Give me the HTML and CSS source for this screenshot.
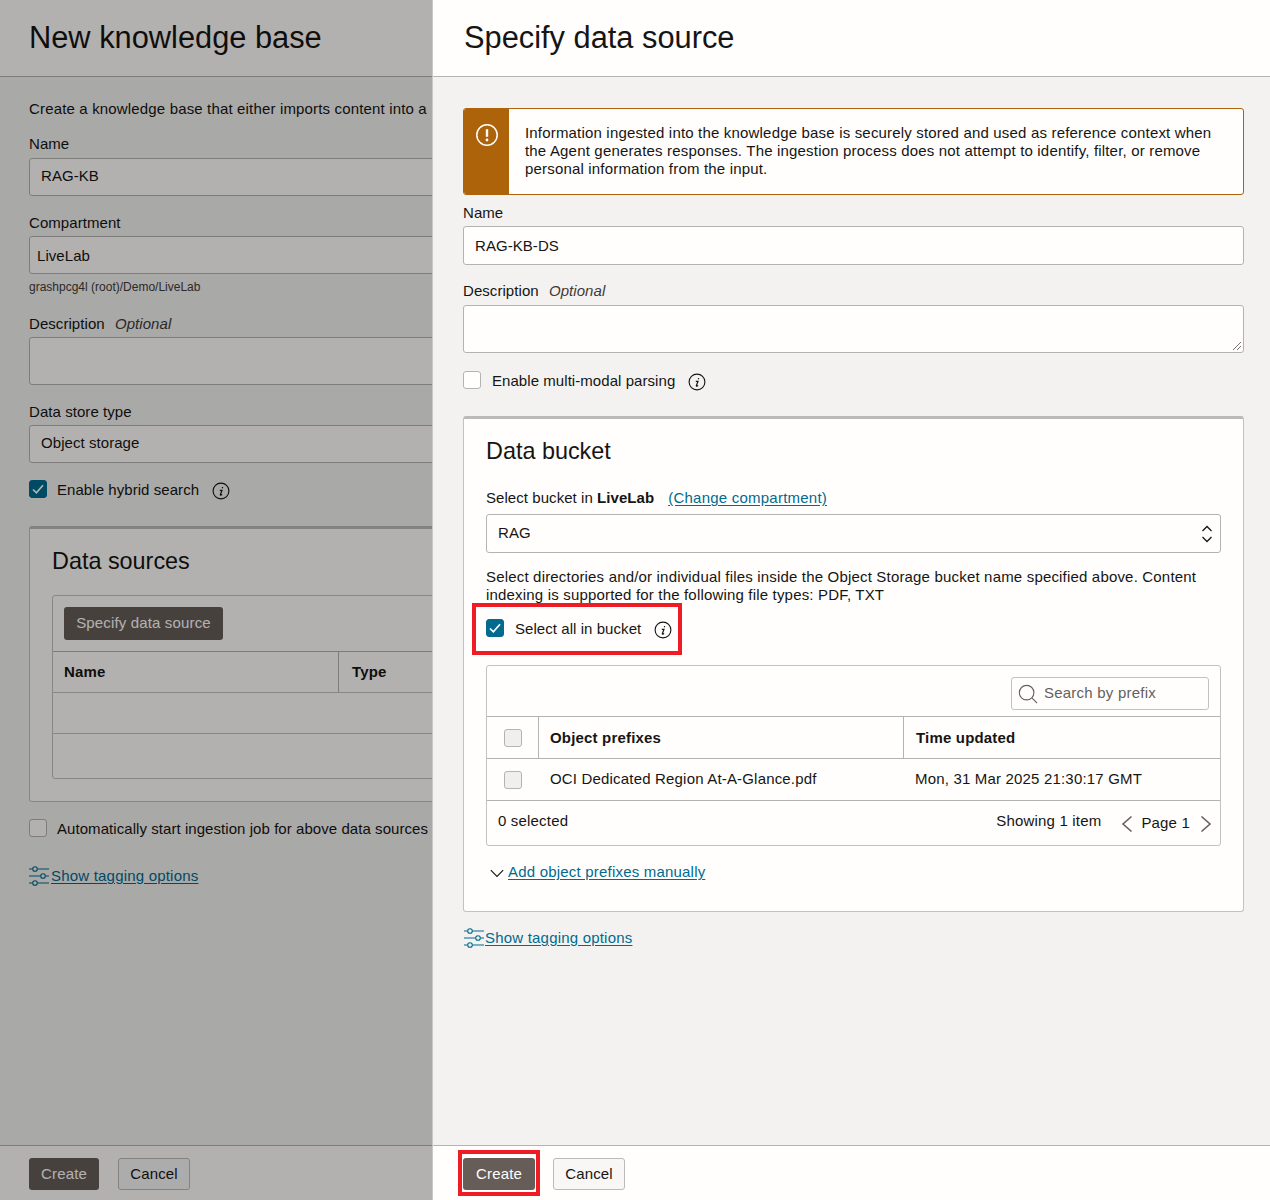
FILE: index.html
```html
<!DOCTYPE html>
<html lang="en">
<head>
<meta charset="utf-8">
<title>Specify data source</title>
<link rel="stylesheet" href="styles.css">
</head>
<body>
<svg class="defs" width="0" height="0" aria-hidden="true">
  <symbol id="info" viewBox="0 0 18 18"><circle cx="9" cy="9" r="7.9" fill="none" stroke="currentColor" stroke-width="1.1"/><path d="M10.500 5v1.300M7.800 8.300h2.200L8.300 12.800c0 .5.800.5 1.800-.2" fill="none" stroke="currentColor" stroke-width="1.200"/></symbol>
  <symbol id="tag" viewBox="0 0 20 20"><g fill="none" stroke="currentColor" stroke-width="1.1"><circle cx="6" cy="3" r="2.3"/><path d="M0 3h3.500M8.500 3H20"/><circle cx="14" cy="10" r="2.3"/><path d="M0 10h11.500M16.500 10H20"/><circle cx="6" cy="17" r="2.3"/><path d="M0 17h3.500M8.500 17H20"/></g></symbol>
  <symbol id="check" viewBox="0 0 18 18"><path d="M4 9.500l3.400 3.300L14 5.200" fill="none" stroke="#fff" stroke-width="1.700"/></symbol>
</svg>

<section class="panel panel-back">
  <header class="panel-head"><h1>New knowledge base</h1></header>
  <main class="panel-body body-back">
    <div class="clip">
      <p class="intro">Create a knowledge base that either imports content into a</p>
      <div class="label l-name">Name</div>
      <div class="input h38">RAG-KB</div>
      <div class="label l-comp">Compartment</div>
      <div class="input h38 tight">LiveLab</div>
      <div class="hint">grashpcg4l (root)/Demo/LiveLab</div>
      <div class="label l-desc">Description <em>Optional</em></div>
      <div class="input h48"></div>
      <div class="label l-store">Data store type</div>
      <div class="input h38">Object storage</div>
      <div class="check-row r-hybrid"><span class="box on back"><svg><use href="#check"/></svg></span><span class="check-text">Enable hybrid search</span><svg class="info"><use href="#info"/></svg></div>
      <div class="card card-back">
        <h2>Data sources</h2>
        <div class="tbl tbl-back">
          <div class="tb-top"><span class="btn primary back wide">Specify data source</span></div>
          <div class="ds-row ds-head"><b class="ds-c1">Name</b><b class="ds-c2">Type</b></div>
          <div class="ds-row ds-empty"></div>
          <div class="ds-last"></div>
        </div>
      </div>
      <div class="check-row r-auto"><span class="box"></span><span class="check-text">Automatically start ingestion job for above data sources</span></div>
      <a class="tag-link tl-back"><svg><use href="#tag"/></svg><span>Show tagging options</span></a>
    </div>
  </main>
  <footer class="panel-foot"><span class="btn primary back">Create</span><span class="btn second">Cancel</span></footer>
  <div class="scrim"></div>
</section>

<section class="panel panel-front">
  <header class="panel-head"><h1>Specify data source</h1></header>
  <main class="panel-body">
    <div class="alert">
      <div class="alert-side"><svg viewBox="0 0 24 24"><circle cx="12" cy="12" r="10.200" fill="none" stroke="#fff" stroke-width="1.500"/><path d="M12 6.200v7.600" stroke="#fff" stroke-width="2.400"/><circle cx="12" cy="17" r="1.400" fill="#fff"/></svg></div>
      <p>Information ingested into the knowledge base is securely stored and used as reference context when the Agent generates responses. The ingestion process does not attempt to identify, filter, or remove personal information from the input.</p>
    </div>
    <div class="label f-name">Name</div>
    <div class="input h39">RAG-KB-DS</div>
    <div class="label f-desc">Description <em>Optional</em></div>
    <div class="input h48 grip"></div>
    <div class="check-row r-multi"><span class="box"></span><span class="check-text">Enable multi-modal parsing</span><svg class="info"><use href="#info"/></svg></div>

    <div class="card card-front">
      <h2>Data bucket</h2>
      <div class="bucket-line">Select bucket in <b>LiveLab</b><a class="link">(Change compartment)</a></div>
      <div class="input h39 select">RAG
        <svg viewBox="0 0 12 18"><path d="M1.500 6L6 1.500 10.500 6M1.500 12L6 16.500 10.500 12" fill="none" stroke="#161513" stroke-width="1.300"/></svg>
      </div>
      <p class="bucket-text">Select directories and/or individual files inside the Object Storage bucket name specified above. Content indexing is supported for the following file types: PDF, TXT</p>
      <div class="check-row r-all">
        <span class="box on"><svg><use href="#check"/></svg></span><span class="check-text">Select all in bucket</span><svg class="info"><use href="#info"/></svg>
        <i class="mark mark-all"></i>
      </div>
      <div class="tbl tbl-front">
        <div class="tb-search">
          <div class="search"><svg viewBox="0 0 22 22"><circle cx="9.500" cy="9.500" r="8" fill="none" stroke="#665f5b" stroke-width="1.200"/><path d="M15.500 15.500l5.500 5.500" stroke="#665f5b" stroke-width="1.200"/></svg><span>Search by prefix</span></div>
        </div>
        <div class="ob-row ob-head">
          <div class="ob-c0"><span class="box soft"></span></div>
          <b class="ob-c1">Object prefixes</b>
          <b class="ob-c2">Time updated</b>
        </div>
        <div class="ob-row ob-data">
          <div class="ob-c0 plain"><span class="box soft"></span></div>
          <span class="ob-c1 plain">OCI Dedicated Region At-A-Glance.pdf</span>
          <span class="ob-c2 plain">Mon, 31 Mar 2025 21:30:17 GMT</span>
        </div>
        <div class="ob-foot">
          <span class="sel">0 selected</span>
          <span class="show">Showing 1 item</span>
          <svg class="chev" viewBox="0 0 12 18"><path d="M10.500 1.500L2 9l8.500 7.500" fill="none" stroke="#665f5b" stroke-width="1.600"/></svg>
          <span class="page">Page 1</span>
          <svg class="chev chev-next" viewBox="0 0 12 18"><path d="M1.500 1.500L10 9l-8.500 7.500" fill="none" stroke="#665f5b" stroke-width="1.600"/></svg>
        </div>
      </div>
      <div class="add-line"><svg viewBox="0 0 14 9"><path d="M.8 1.200L7 7.500l6.200-6.300" fill="none" stroke="#161513" stroke-width="1.100"/></svg><a class="link">Add object prefixes manually</a></div>
    </div>
    <a class="tag-link tl-front"><svg><use href="#tag"/></svg><span>Show tagging options</span></a>
  </main>
  <footer class="panel-foot"><span class="btn primary">Create<i class="mark mark-create"></i></span><span class="btn second">Cancel</span></footer>
</section>
</body>
</html>
```
FILE: styles.css
```css
* { box-sizing: border-box; }
html, body { margin: 0; height: 1200px; overflow: hidden; }
body {
  display: flex;
  font-family: "Liberation Sans", Arial, sans-serif;
  font-size: 15px;
  letter-spacing: .06px;
  line-height: 18px;
  color: #161513;
  background: #f3f2f1;
}
.defs { position: absolute; }
.panel { position: relative; height: 1200px; display: flex; flex-direction: column; overflow: hidden; }
.panel-back { width: 433px; flex: none; }
.panel-front { flex: 1; border-left: 1px solid #c9c7c4; margin-left: -1px; }
.panel-head { height: 77px; flex: none; background: #fffefd; border-bottom: 1px solid #b5b3b0; padding-left: 29px; }
.panel-front .panel-head { padding-left: 31px; }
h1 { margin: 0; font-weight: 400; font-size: 30.8px; line-height: 76px; letter-spacing: 0; }
h2 { margin: 0; font-weight: 400; font-size: 23.4px; line-height: 28px; letter-spacing: 0; }
.panel-body { flex: 1; padding: 31px 26px 0 30px; background: #f3f2f1; }
.body-back { padding: 23px 0 0 29px; }
.clip { width: 800px; }
.panel-foot {
  height: 55px; flex: none; background: #fffefd; border-top: 1px solid #b5b3b0;
  display: flex; align-items: center; gap: 19px; padding: 2px 0 0 29px;
}
.panel-front .panel-foot { padding-left: 30px; }
.scrim { position: absolute; inset: 0; background: rgba(0, 0, 0, .3); }

.intro { margin: 0; white-space: nowrap; letter-spacing: .16px; }
.label { height: 18px; }
.label em { color: #3f3b38; margin-left: 6px; }
.l-name { margin-top: 17px; }
.l-comp { margin-top: 18px; }
.l-desc { margin-top: 21px; }
.l-store { margin-top: 18px; }
.f-name { margin-top: 9px; }
.f-desc { margin-top: 17px; }
.label + .input { margin-top: 4px; }
.l-name + .input { margin-top: 5px; }
.f-desc + .input { margin-top: 5px; }

.input { display: flex; align-items: center; background: #fffefd; border: 1px solid #b5b3b0; border-radius: 3px; padding: 0 11px; }
.h38 { height: 38px; padding-bottom: 2px; }
.h39 { height: 39px; }
.h48 { height: 48px; }
.tight { padding: 1px 0 0 7px; }
.hint { font-size: 12px; line-height: 14px; margin-top: 6px; color: #3f3b38; letter-spacing: 0; }
.grip { position: relative; }
.grip::after {
  content: ""; position: absolute; right: 2px; bottom: 2px; width: 8px; height: 8px;
  background: linear-gradient(135deg, transparent 0 45%, #77716d 45% 53%, transparent 53% 70%, #77716d 70% 78%, transparent 78%);
}

.check-row { position: relative; display: flex; align-items: center; height: 18px; }
.check-text { margin-top: 2px; }
.box { flex: none; width: 18px; height: 18px; border: 1px solid #b5b3b0; border-radius: 3px; background: #fffefd; margin-right: 10px; display: block; }
.panel-front .box { margin-right: 11px; }
.box svg { display: block; width: 18px; height: 18px; margin: -1px; }
.box.on { background: #006b8f; border-color: #006b8f; }
.panel-front .box.soft { background: #f1efed; margin: 0; }
.info { width: 18px; height: 18px; margin-left: 13px; margin-top: 4px; color: #161513; flex: none; }
.r-hybrid { margin-top: 17px; }
.r-auto { margin-top: 17px; }
.r-multi { margin-top: 18px; }
.r-all { margin-top: 15px; }

.card { background: #fffefd; border: 1px solid #c4c2bf; border-top: 3px solid #bcbab6; border-radius: 3px; }
.card-back { margin-top: 28px; height: 276px; padding: 18px 22px 0; width: 760px; }
.card-front { margin-top: 27px; height: 496px; padding: 18px 22px 0; }
.tbl { background: #fffefd; border: 1px solid #c4c2bf; border-radius: 3px; }
.tbl-back { margin-top: 20px; height: 184px; width: 700px; }
.tb-top { height: 56px; padding: 11px 11px 0; border-bottom: 1px solid #b5b3b0; }
.ds-row { display: flex; height: 41px; border-bottom: 1px solid #c4c2bf; }
.ds-head b { display: flex; align-items: center; padding-left: 11px; letter-spacing: .15px; }
.ds-c1 { width: 286px; border-right: 1px solid #b5b3b0; }
.ds-head .ds-c2 { padding-left: 13px; }

.btn { position: relative; display: inline-flex; align-items: center; justify-content: center; height: 32px; border-radius: 3px; padding: 0 12px; letter-spacing: .15px; }
.btn.primary { background: #665d58; color: #fffefd; width: 70px; }
.btn.wide { height: 33px; width: 159px; padding-bottom: 2px; }
.btn.second { background: #f8f7f6; border: 1px solid #bcbab6; width: 72px; }
.panel-front .btn.primary { width: 72px; margin-right: -1px; }

.bucket-line { margin-top: 24px; height: 18px; }
.link { color: #006b8f; text-decoration: underline; text-underline-offset: 2px; letter-spacing: .2px; }
.bucket-line .link { margin-left: 14px; letter-spacing: .23px; }
.bucket-line + .input { margin-top: 7px; }
.select { justify-content: space-between; position: relative; padding: 0 7px 2px 11px; }
.select svg { width: 12px; height: 18px; margin-top: 2px; }
.bucket-text { margin: 15px 0 0; letter-spacing: .18px; }

.mark { position: absolute; border: 4px solid #ee1c25; pointer-events: none; }
.mark-all { left: -14px; top: -16px; width: 210px; height: 52px; }
.mark-create { left: -5px; top: -8px; width: 82px; height: 46px; }

.tbl-front { margin-top: 28px; height: 181px; }
.tb-search { height: 51px; padding: 11px 11px 0 0; display: flex; justify-content: flex-end; border-bottom: 1px solid #b5b3b0; }
.search { width: 198px; height: 33px; border: 1px solid #c4c2bf; border-radius: 3px; display: flex; align-items: center; padding-left: 6px; color: #665f5b; letter-spacing: .22px; }
.search svg { width: 20px; height: 20px; margin-right: 6px; flex: none; }
.search span { margin-top: -2px; }
.ob-row { display: flex; height: 42px; border-bottom: 1px solid #b5b3b0; letter-spacing: .18px; }
.ob-c0 { width: 52px; flex: none; border-right: 1px solid #b5b3b0; display: flex; align-items: center; justify-content: center; }
.ob-c0.plain { border-right-color: transparent; }
.ob-c1 { width: 365px; flex: none; border-right: 1px solid #b5b3b0; display: flex; align-items: center; padding-left: 11px; }
.ob-c1.plain { border-right-color: transparent; padding-bottom: 2px; }
.ob-c2 { display: flex; align-items: center; padding-left: 12px; }
.ob-c2.plain { padding: 0 0 2px 11px; }
.ob-foot { display: flex; align-items: center; height: 45px; padding: 0 8px 0 11px; letter-spacing: .18px; }
.sel { flex: 1; margin-top: -5px; }
.show { margin: -5px 1px 0 0; }
.chev { width: 12px; height: 18px; margin-left: 19px; flex: none; }
.page { margin: -2px -9px 0 8px; }
.add-line { display: flex; align-items: center; gap: 4px; margin-top: 17px; height: 18px; padding-left: 4px; }
.add-line svg { width: 14px; height: 9px; margin-top: 3px; }

.tag-link { display: flex; align-items: center; color: #006b8f; height: 20px; letter-spacing: .2px; }
.tag-link svg { width: 20px; height: 20px; margin: 0 2px 0 0; flex: none; }
.tl-front svg { margin: 0 1px 0 1px; }
.tag-link span { text-decoration: underline; text-underline-offset: 2px; }
.tl-back { margin-top: 29px; }
.tl-front { margin-top: 16px; }

.alert { display: flex; height: 87px; background: #fffefd; border: 1px solid #ad6309; border-radius: 3px; overflow: hidden; }
.alert-side { width: 45px; flex: none; background: #ad6309; display: flex; justify-content: center; padding-top: 14px; }
.alert-side svg { width: 24px; height: 24px; }
.alert p { margin: 15px 0 0 16px; width: 705px; letter-spacing: .18px; }
```
